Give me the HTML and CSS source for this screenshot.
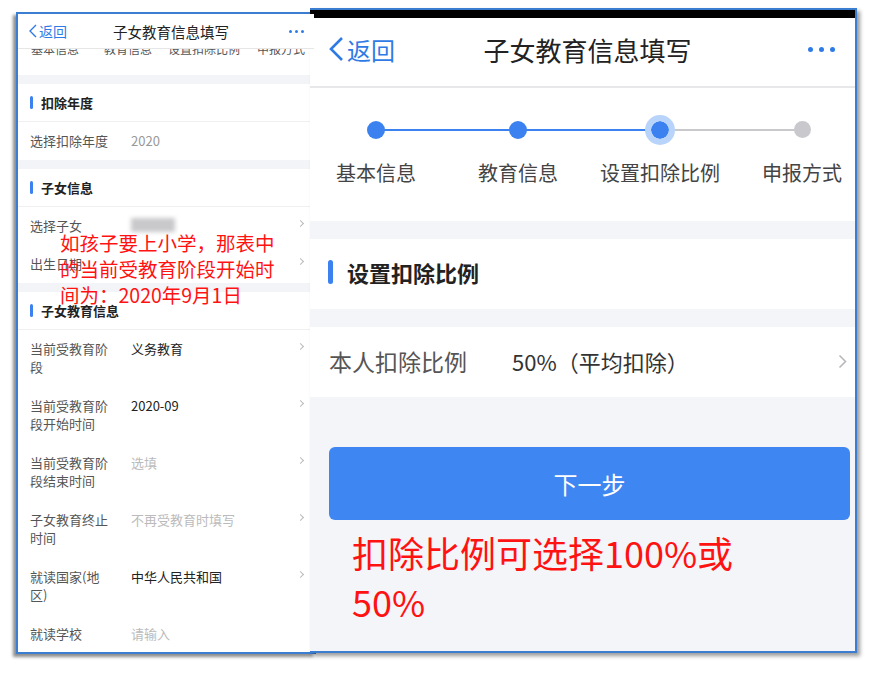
FILE: index.html
```html
<!DOCTYPE html>
<html lang="zh-CN">
<head>
    <meta charset="UTF-8">
    <title>子女教育信息填写</title>
    <link rel="stylesheet" href="styles.css">
</head>
<body>
    <div class="stage">
        <!-- first screen: the long form -->
        <div class="phone phone-small">
            <div class="s-header">
                <span class="s-back">
                    <svg width="8" height="14" viewBox="0 0 8 14"><polyline points="7,1 1,7 7,13" fill="none" stroke="#2f7be6" stroke-width="1.4"/></svg>
                    返回
                </span>
                <span class="s-title">子女教育信息填写</span>
                <span class="s-more"><i></i><i></i><i></i></span>
            </div>
            <div class="s-steps">
                <span>基本信息</span>
                <span>教育信息</span>
                <span>设置扣除比例</span>
                <span>申报方式</span>
            </div>

            <div class="s-gap"></div>
            <div class="s-section">扣除年度</div>
            <div class="s-row">
                <span class="s-label">选择扣除年度</span>
                <span class="s-value muted-dark">2020</span>
            </div>

            <div class="s-gap"></div>
            <div class="s-section">子女信息</div>
            <div class="s-row">
                <span class="s-label">选择子女</span>
                <span class="s-value"><span class="blurred"></span></span>
                <span class="s-arrow"></span>
            </div>
            <div class="s-row last">
                <span class="s-label">出生日期</span>
                <span class="s-value"></span>
                <span class="s-arrow"></span>
            </div>

            <div class="s-gap"></div>
            <div class="s-section">子女教育信息</div>
            <div class="s-row tall">
                <span class="s-label">当前受教育阶段</span>
                <span class="s-value">义务教育</span>
                <span class="s-arrow"></span>
            </div>
            <div class="s-row tall">
                <span class="s-label">当前受教育阶段开始时间</span>
                <span class="s-value">2020-09</span>
                <span class="s-arrow"></span>
            </div>
            <div class="s-row tall">
                <span class="s-label">当前受教育阶段结束时间</span>
                <span class="s-value placeholder">选填</span>
                <span class="s-arrow"></span>
            </div>
            <div class="s-row tall">
                <span class="s-label">子女教育终止时间</span>
                <span class="s-value placeholder">不再受教育时填写</span>
                <span class="s-arrow"></span>
            </div>
            <div class="s-row tall">
                <span class="s-label">就读国家(地区)</span>
                <span class="s-value">中华人民共和国</span>
                <span class="s-arrow"></span>
            </div>
            <div class="s-row last">
                <span class="s-label">就读学校</span>
                <span class="s-value placeholder">请输入</span>
            </div>

            <p class="note note-small">如孩子要上小学，那表中<br>的当前受教育阶段开始时<br>间为：2020年9月1日</p>
        </div>

        <!-- second screen: deduction ratio step -->
        <div class="phone phone-big">
            <div class="statusbar"></div>
            <div class="b-header">
                <span class="b-back">
                    <svg width="16" height="26" viewBox="0 0 16 26"><polyline points="14,2 3,13 14,24" fill="none" stroke="#2f7be6" stroke-width="2.6"/></svg>
                    返回
                </span>
                <span class="b-title">子女教育信息填写</span>
                <span class="b-more"><i></i><i></i><i></i></span>
            </div>

            <div class="steps">
                <div class="step done"><span class="dot"></span><span class="step-name">基本信息</span></div>
                <div class="step done"><span class="dot"></span><span class="step-name">教育信息</span></div>
                <div class="step current"><span class="dot"></span><span class="step-name">设置扣除比例</span></div>
                <div class="step todo"><span class="dot"></span><span class="step-name">申报方式</span></div>
            </div>

            <div class="b-gap"></div>
            <div class="b-section">设置扣除比例</div>
            <div class="b-gap"></div>
            <div class="b-row">
                <span class="b-label">本人扣除比例</span>
                <span class="b-value">50%（平均扣除）</span>
                <svg class="b-arrow" width="9" height="15" viewBox="0 0 9 15"><polyline points="1.5,1.5 7.5,7.5 1.5,13.5" fill="none" stroke="#b8b8bc" stroke-width="1.6"/></svg>
            </div>

            <div class="b-footer">
                <button class="next" type="button">下一步</button>
                <p class="note note-big">扣除比例可选择100%或<br>50%</p>
            </div>
        </div>
    </div>
</body>
</html>
```

FILE: styles.css
```css
* {
    box-sizing: border-box;
}
body {
    margin: 0;
    background: #fff;
    font-family: "Noto Sans CJK SC", "Noto Sans", sans-serif;
}
.stage {
    position: relative;
    width: 874px;
    height: 673px;
    overflow: hidden;
}
.phone {
    position: absolute;
    background: #fff;
    overflow: hidden;
}

/* ---------- small screen ---------- */
.phone-small {
    left: 16px;
    top: 12px;
    width: 300px;
    height: 642px;
    border: 2px solid #3b7dd0;
    box-shadow: -3px 3px 3px rgba(0,0,0,0.45);
    background: #f3f4f8;
}
.s-header {
    position: relative;
    z-index: 2;
    display: flex;
    align-items: center;
    height: 35px;
    padding: 0 10px 0 11px;
    background: #fff;
    border-bottom: 1px solid #e6e6e6;
}
.s-back {
    display: flex;
    align-items: center;
    gap: 2px;
    width: 84px;
    color: #2f7be6;
    font-size: 14px;
}
.s-title {
    flex: 1;
    font-size: 14.5px;
    color: #222;
}
.s-more {
    display: flex;
    gap: 3px;
}
.s-more i {
    width: 3px;
    height: 3px;
    border-radius: 50%;
    background: #2f7be6;
}
/* step labels scrolled halfway under the header */
.s-steps {
    display: grid;
    grid-template-columns: 74px 72px 80px 74px;
    height: 40px;
    margin-top: -14px;
    padding-top: 6px;
    background: #fff;
    font-size: 12px;
    color: #555;
    line-height: 16px;
    text-align: center;
}
.s-gap {
    height: 9px;
}
.s-section {
    display: flex;
    align-items: center;
    gap: 8px;
    height: 38px;
    padding-left: 12px;
    background: #fff;
    font-size: 13px;
    font-weight: 700;
    color: #222;
    border-bottom: 1px solid #f0f0f0;
}
.s-section::before {
    content: "";
    width: 3px;
    height: 13px;
    border-radius: 2px;
    background: #3b82f0;
}
.s-row {
    display: flex;
    align-items: flex-start;
    height: 38px;
    padding: 10px 0 0 12px;
    background: #fff;
    font-size: 13px;
    line-height: 18px;
    box-shadow: inset 12px -1px 0 #fff, inset 0 -1px 0 #ececec;
}
.s-row.tall {
    height: 57px;
}
.s-row.last {
    box-shadow: none;
}
.s-label {
    width: 101px;
    padding-right: 20px;
    color: #555;
}
.s-value {
    flex: 1;
    color: #222;
}
.s-value.muted-dark {
    color: #999;
}
.s-value.placeholder {
    color: #bbb;
}
.s-arrow {
    width: 12px;
    height: 14px;
    margin-right: 4px;
}
.s-arrow::before {
    content: "";
    display: block;
    width: 4px;
    height: 4px;
    margin-top: 4px;
    border-top: 1px solid #bbb;
    border-right: 1px solid #bbb;
    transform: rotate(45deg);
}
.blurred {
    display: block;
    width: 44px;
    height: 14px;
    margin-top: 1px;
    background: #c9c9cc;
    filter: blur(2px);
}
.note {
    position: absolute;
    margin: 0;
    color: #ff1212;
    font-family: "Noto Sans CJK SC", sans-serif;
    white-space: nowrap;
}
.note-small {
    left: 42px;
    top: 216px;
    font-size: 19.5px;
    line-height: 26px;
}

/* ---------- big screen ---------- */
.phone-big {
    left: 310px;
    top: 8px;
    width: 547px;
    height: 645px;
    border: 2px solid #3b7dd0;
    border-left: 0;
    box-shadow: 3px 3px 4px rgba(0,0,0,0.4);
    background: #f4f5f9;
    display: flex;
    flex-direction: column;
}
.statusbar {
    height: 8px;
    background: #000;
}
.b-header {
    display: flex;
    align-items: center;
    height: 70px;
    padding: 0 18px 6px;
    background: #fff;
    border-bottom: 2px solid #e8e8ea;
}
.b-back {
    display: flex;
    align-items: center;
    gap: 3px;
    width: 90px;
    color: #2f7be6;
    font-size: 24px;
}
.b-title {
    flex: 1;
    padding-left: 10px;
    text-align: center;
    font-size: 26px;
    color: #222;
}
.b-more {
    display: flex;
    justify-content: flex-end;
    gap: 6px;
    width: 90px;
    padding-right: 2px;
}
.b-more i {
    width: 5px;
    height: 5px;
    border-radius: 50%;
    background: #2f7be6;
}
.steps {
    display: grid;
    grid-template-columns: repeat(4, 142px);
    height: 133px;
    margin-left: -5px;
    padding-top: 21px;
    background: #fff;
}
.step {
    position: relative;
    display: flex;
    flex-direction: column;
    align-items: center;
}
.step + .step::before {
    content: "";
    position: absolute;
    top: 20px;
    right: 50%;
    width: 100%;
    height: 2px;
    background: #3b82f0;
}
.step.todo::before {
    background: #c9c9cd;
}
.dot {
    position: relative;
    z-index: 1;
    width: 18px;
    height: 18px;
    margin-top: 12px;
    border-radius: 50%;
    background: #3b82f0;
}
.step.current .dot {
    width: 30px;
    height: 30px;
    margin-top: 6px;
    margin-bottom: -6px;
    border: 6px solid #b9d4fa;
    background: #3b82f0;
    background-clip: padding-box;
}
.step.todo .dot {
    width: 17px;
    height: 17px;
    background: #c9c9cd;
}
.step-name {
    margin-top: 21px;
    font-size: 20px;
    line-height: 26px;
    color: #444;
}
.step.todo .step-name {
    margin-top: 22px;
}
.b-gap {
    height: 18px;
}
.b-section {
    display: flex;
    align-items: center;
    gap: 14px;
    height: 70px;
    padding: 0 0 4px 18px;
    background: #fff;
    font-size: 22px;
    font-weight: 700;
    color: #222;
}
.b-section::before {
    content: "";
    width: 5px;
    height: 24px;
    border-radius: 3px;
    background: #3b82f0;
}
.b-row {
    display: flex;
    align-items: center;
    height: 70px;
    padding: 0 8px 2px 19px;
    background: #fff;
}
.b-label {
    width: 183px;
    font-size: 23px;
    color: #555;
}
.b-value {
    flex: 1;
    font-size: 22px;
    color: #333;
}
.b-footer {
    padding: 50px 6px 0 19px;
}
.next {
    display: block;
    width: 521px;
    height: 73px;
    border: none;
    border-radius: 6px;
    background: #3e86f1;
    color: #fff;
    font-family: inherit;
    font-size: 24px;
}
.note-big {
    position: static;
    margin: 8px 0 0 23px;
    font-size: 36px;
    line-height: 49px;
}
```
